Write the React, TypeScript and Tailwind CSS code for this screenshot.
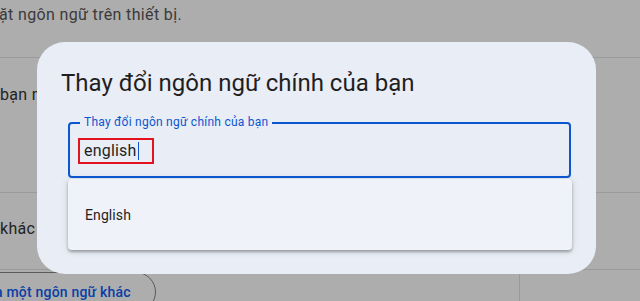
import React from "react";

export default function App() {
  const font = { fontFamily: "Roboto, 'Noto Sans', sans-serif" };
  return (
    <div className="relative w-[640px] h-[301px] overflow-hidden bg-[#adadad]" style={font}>
      {/* background page */}
      <div className="flex flex-col text-[#2b2b2b]">
        <div className="h-[58px] border-b border-[#9a9a9a] pt-[3px]">
          <span className="block ml-[-1px] text-[16px] leading-[24px] tracking-[0.35px] text-[#3a3a3a] whitespace-nowrap">ặt ngôn ngữ trên thiết bị.</span>
        </div>
        <div className="h-[135px] border-b border-[#9a9a9a] flex items-start pt-[25px]">
          <span className="text-[16px] leading-[24px] tracking-[0.3px] text-[#222] whitespace-nowrap">bạn ngôn ngữ</span>
        </div>
        <div className="h-[77px] border-b border-[#9a9a9a] flex items-start pt-[24px]">
          <span className="text-[16px] leading-[24px] tracking-[0.3px] text-[#222] whitespace-nowrap">khác</span>
        </div>
        <div className="flex h-[40px]">
          <div className="w-[196px] ml-[-40px] h-[40px] mt-[2px] rounded-full border border-[#5a5a5a] flex items-center pl-[34px] shrink-0">
            <span className="text-[14px] text-[#0a3fa6] font-medium tracking-[0.2px] whitespace-nowrap">a một ngôn ngữ khác</span>
          </div>
          <div className="ml-[363px] border-l border-[#9a9a9a] h-[40px] mt-[4px]" />
        </div>
      </div>

      {/* dialog */}
      <div className="absolute left-[37px] top-[42px] w-[559px] h-[232px] rounded-[28px] bg-[#e9edf6] flex flex-col">
        <div className="pl-[24px] pt-[25px] text-[24px] leading-[32px] text-[#1f1f1f] whitespace-nowrap">
          Thay đổi ngôn ngữ chính của bạn
        </div>
        <div className="relative ml-[31px] mt-[23px] w-[503px] h-[56px] rounded-[4px] border-2 border-[#0b57d0]">
          <span className="absolute left-[10px] top-[-10px] px-[4px] bg-[#e9edf6] text-[12px] leading-[16px] tracking-[0.25px] text-[#0b57d0] whitespace-nowrap">
            Thay đổi ngôn ngữ chính của bạn
          </span>
          <div className="ml-[8px] mt-[14px] w-[76px] h-[26px] border-2 border-[#e3121c] flex items-center pl-[4px]">
            <span className="text-[16px] leading-[20px] tracking-[0.2px] text-[#1f1f1f]">english</span>
            <span className="w-[1px] h-[18px] bg-[#0b57d0] ml-[1px]" />
          </div>
        </div>
        <div className="ml-[31px] w-[504px] h-[71px] mt-[1px] rounded-[4px] bg-[#eff2f8] shadow-[0_2px_3px_rgba(0,0,0,0.3),0_1px_8px_rgba(0,0,0,0.12)] flex items-center pl-[17px]">
          <span className="text-[14px] leading-[20px] tracking-[0.1px] text-[#1f1f1f]">English</span>
        </div>
      </div>
    </div>
  );
}
